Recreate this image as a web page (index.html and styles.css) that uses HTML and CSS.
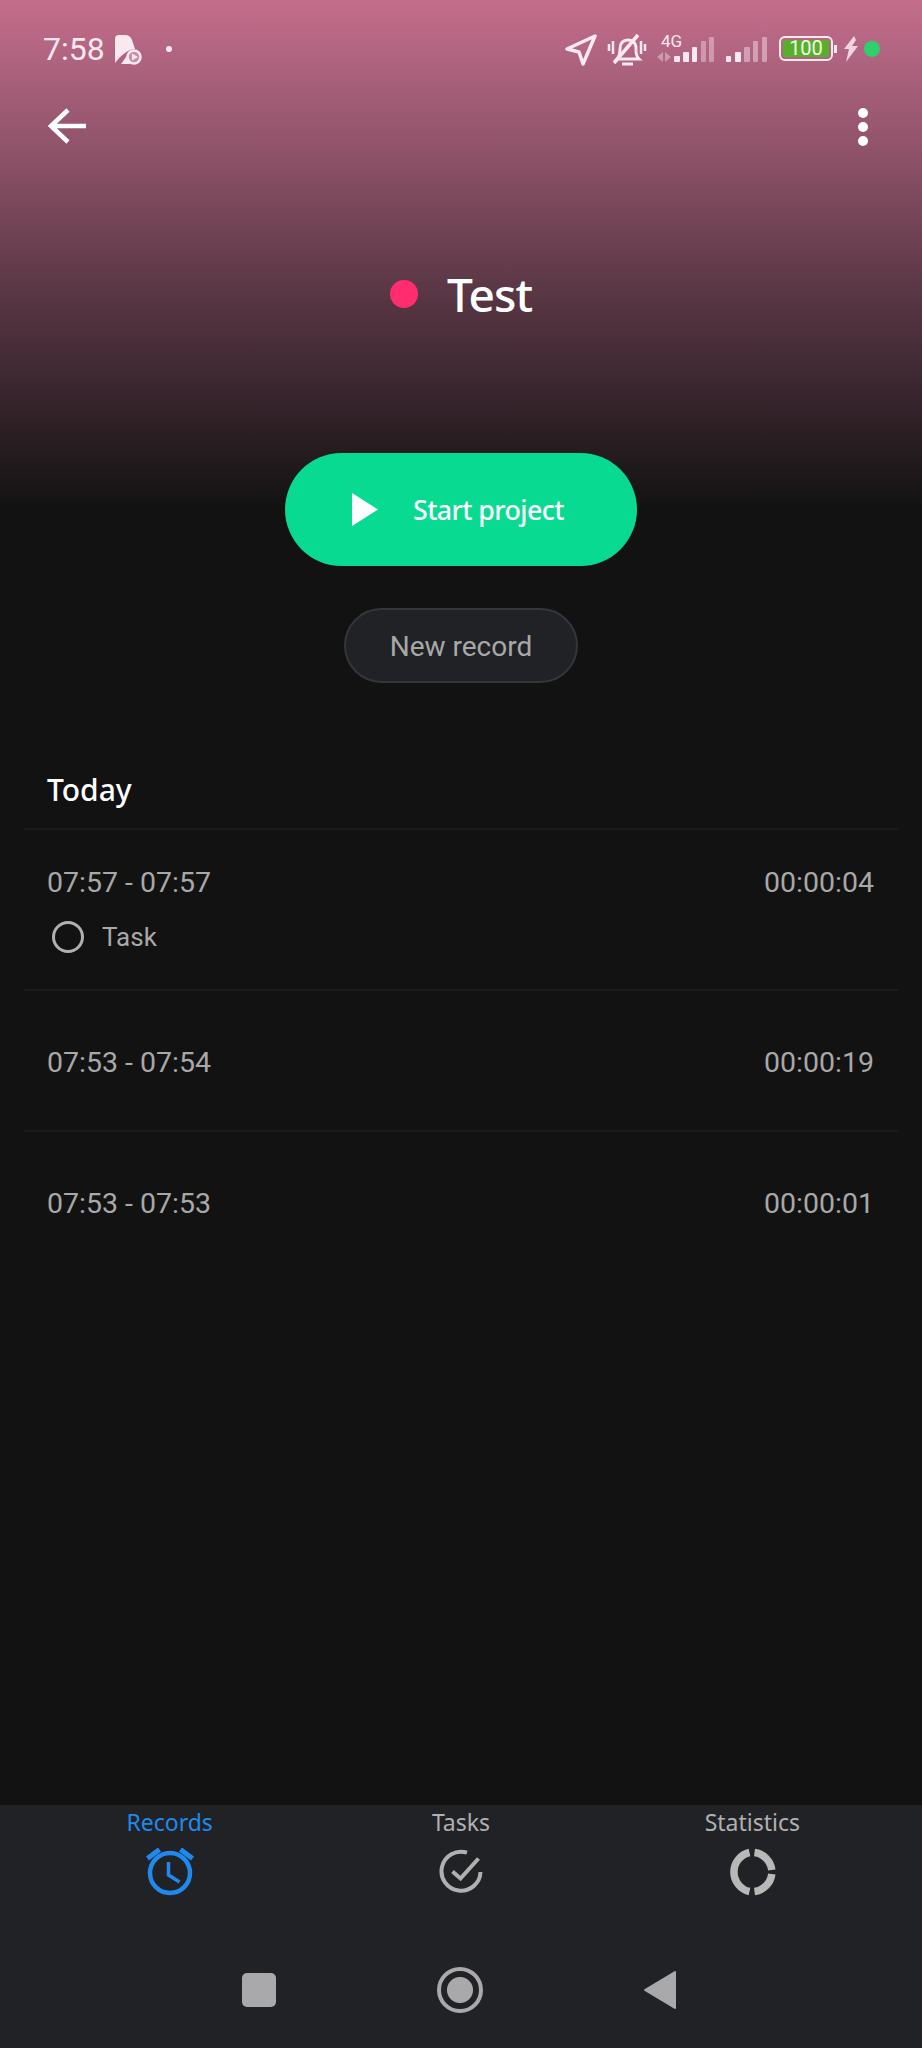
FILE: index.html
```html
<!DOCTYPE html>
<html lang="en">
<head>
    <meta charset="UTF-8">
    <meta name="viewport" content="width=device-width, initial-scale=1.0">
    <title>Test</title>
    <link rel="stylesheet" href="styles.css">
</head>
<body>
    <div class="screen">
        <div class="status-bar">
            <div class="status-left">
                <span class="clock">7:58</span>
                <svg class="app-icon" width="28" height="31" viewBox="0 0 28 31">
                    <path d="M1 29V5q0-4 4-4h6q5 0 7 5l3 9q-4 0-7 2-7 4-13 12z" fill="#f9e9ef"/>
                    <path d="M7 30l5-7q1-2 3-3-1 5 1 10z" fill="#f9e9ef"/>
                    <circle cx="20" cy="23" r="6.500" fill="#c98fa5" stroke="#f9e9ef" stroke-width="2.500"/>
                    <path d="M18 19.500l6 3.500-6 3.500z" fill="#f9e9ef"/>
                </svg>
                <span class="status-dot"></span>
            </div>
            <div class="status-right">
                <svg class="ic-location" width="33" height="33" viewBox="0 0 33 33"><path d="M31 3L3 16l12 3 4 12z" fill="none" stroke="#f9e9ef" stroke-width="3.500" stroke-linejoin="round"/></svg>
                <svg class="ic-bell" width="40" height="34" viewBox="0 0 40 34" fill="none" stroke="#f9e9ef">
                    <path d="M10 26q3-3 3-10 0-9 8-9 7 0 8 7v3q0 6 3 9z" stroke-width="3"/>
                    <path d="M15 31h11" stroke-width="3"/>
                    <path d="M31 2L7 30" stroke-width="3.500"/>
                    <path d="M2 11v7M6 8v13M34 8v13M38 11v7" stroke-width="2.500"/>
                </svg>
                <div class="signal">
                    <span class="net-label">4G</span>
                    <svg width="58" height="25" viewBox="0 0 58 25">
                        <path d="M6 15v10l-6-5zM8 15v10l6-5z" fill="#f9e9ef" opacity="0.4"/>
                        <rect x="17" y="19" width="6" height="6" rx="1" fill="#f9e9ef"/>
                        <rect x="26" y="15" width="6" height="10" rx="1" fill="#f9e9ef"/>
                        <rect x="35" y="10" width="5" height="15" rx="1" fill="#f9e9ef"/>
                        <rect x="44" y="4" width="5" height="21" rx="1" fill="#f9e9ef" opacity="0.4"/>
                        <rect x="52" y="0" width="5" height="25" rx="1" fill="#f9e9ef" opacity="0.4"/>
                    </svg>
                </div>
                <svg class="signal-2" width="41" height="25" viewBox="0 0 41 25">
                    <rect x="0" y="19" width="5" height="6" rx="1" fill="#f9e9ef"/>
                    <rect x="9" y="15" width="6" height="10" rx="1" fill="#f9e9ef"/>
                    <rect x="18" y="10" width="6" height="15" rx="1" fill="#f9e9ef" opacity="0.45"/>
                    <rect x="27" y="4" width="5" height="21" rx="1" fill="#f9e9ef" opacity="0.45"/>
                    <rect x="36" y="0" width="5" height="25" rx="1" fill="#f9e9ef" opacity="0.45"/>
                </svg>
                <div class="battery">
                    <div class="battery-body"><span class="battery-level">100</span></div>
                    <span class="battery-nub"></span>
                </div>
                <svg class="bolt" width="14" height="26" viewBox="0 0 14 26"><path d="M10 0L0 13h5L2 26l12-16H8l4-6z" fill="#f9e9ef" opacity="0.85"/></svg>
                <span class="charge-dot"></span>
            </div>
        </div>

        <div class="toolbar">
            <svg width="40" height="38" viewBox="0 0 40 38" fill="none" stroke="#fff" stroke-width="4.500"><path d="M21 3L4 19l17 16M4 19h35"/></svg>
            <div class="more">
                <span></span>
                <span></span>
                <span></span>
            </div>
        </div>

        <div class="title">
            <span class="title-dot"></span>
            <h1>Test</h1>
        </div>

        <div class="actions">
            <button class="start-btn">
                <svg width="26" height="33" viewBox="0 0 26 33"><path d="M0 0l26 16.500L0 33z" fill="#fff"/></svg>
                <span>Start project</span>
            </button>
            <button class="new-btn">New record</button>
        </div>

        <div class="records">
            <h2 class="day">Today</h2>
            <div class="record record-task">
                <div class="record-times">
                    <span>07:57 - 07:57</span>
                    <span>00:00:04</span>
                </div>
                <div class="record-meta">
                    <span class="task-circle"></span>
                    <span>Task</span>
                </div>
            </div>
            <div class="record">
                <div class="record-times">
                    <span>07:53 - 07:54</span>
                    <span>00:00:19</span>
                </div>
            </div>
            <div class="record">
                <div class="record-times">
                    <span>07:53 - 07:53</span>
                    <span>00:00:01</span>
                </div>
            </div>
        </div>

        <div class="bottom">
            <div class="tabs">
                <div class="tab active">
                    <span>Records</span>
                    <svg width="48" height="48" viewBox="0 0 48 48" fill="none" stroke="#2089ec" stroke-width="4.500">
                        <circle cx="24" cy="25" r="20"/>
                        <path d="M22.500 14v13l11 7" stroke-width="3.500"/>
                        <path d="M1.500 10.500L13.500 1.500M34.500 1.500L46.500 10.500" stroke-width="5"/>
                    </svg>
                </div>
                <div class="tab">
                    <span>Tasks</span>
                    <svg width="48" height="48" viewBox="0 0 48 48" fill="none" stroke="#b0b0b0" stroke-width="4">
                        <path d="M30 4.700A19.500 19.500 0 1 0 43.500 24"/>
                        <path d="M15.500 23.500l8 7 18-20"/>
                    </svg>
                </div>
                <div class="tab">
                    <span>Statistics</span>
                    <svg width="48" height="48" viewBox="0 0 48 48" fill="none" stroke="#b8b8b8" stroke-width="7.500">
                        <path d="M21.500 4.500A20 20 0 0 0 21.500 43.500"/>
                        <path d="M26.500 4.500A20 20 0 0 1 43.800 22"/>
                        <path d="M43.800 26A20 20 0 0 1 26.500 43.500"/>
                    </svg>
                </div>
            </div>
            <div class="nav">
                <span class="nav-square"></span>
                <span class="nav-home"></span>
                <svg width="34" height="40" viewBox="0 0 34 40"><path d="M32 2v36L2 20z" fill="#a9a9ab" stroke="#a9a9ab" stroke-width="2" stroke-linejoin="round"/></svg>
            </div>
        </div>
    </div>
</body>
</html>
```

FILE: styles.css
```css
* {
    box-sizing: border-box;
}
body {
    margin: 0;
    background-color: #121212;
    font-family: Roboto, sans-serif;
}
.screen {
    width: 922px;
    height: 2048px;
    display: flex;
    flex-direction: column;
    background: linear-gradient(#c46e8c 0, #8f5369 150px, #5a3745 290px, #121212 510px);
    overflow: hidden;
}
.status-bar {
    height: 98px;
    padding: 32px 42px 0 43px;
    display: flex;
    justify-content: space-between;
}
.status-left {
    display: flex;
    align-items: center;
    height: 34px;
}
.status-right {
    display: flex;
    align-items: flex-start;
    height: 34px;
}
.clock {
    font-size: 32px;
    color: #f9e9ef;
    margin-right: 9px;
}
.status-dot {
    width: 6px;
    height: 6px;
    border-radius: 50%;
    background-color: #f9e9ef;
    margin-left: 24px;
}
.ic-location {
    margin-top: 1px;
}
.ic-bell {
    margin: 1px 0 0 10px;
}
.signal {
    position: relative;
    margin: 5px 0 0 10px;
}
.signal svg {
    display: block;
}
.net-label {
    position: absolute;
    left: 4px;
    top: -4px;
    font-size: 17px;
    line-height: 17px;
    color: #f9e9ef;
}
.signal-2 {
    margin: 5px 0 0 11px;
}
.battery {
    display: flex;
    align-items: center;
    margin: 4px 0 0 12px;
}
.battery-body {
    width: 54px;
    height: 25px;
    border: 2.5px solid #f9e9ef;
    border-radius: 6px;
    padding: 2px;
    display: flex;
}
.battery-level {
    flex: 1;
    background-color: #58b02a;
    border-radius: 1px;
    color: #f4f8e8;
    font-size: 20px;
    line-height: 16px;
    text-align: center;
}
.battery-nub {
    width: 3px;
    height: 8px;
    margin-left: 1px;
    background-color: #f9e9ef;
}
.bolt {
    margin: 4px 0 0 7px;
}
.charge-dot {
    width: 16px;
    height: 16px;
    margin: 9px 0 0 6px;
    border-radius: 50%;
    background-color: #2fd06c;
}
.toolbar {
    height: 60px;
    padding: 9px 54px 0 47px;
    display: flex;
    justify-content: space-between;
}
.more {
    display: flex;
    flex-direction: column;
    gap: 4px;
    padding-top: 1px;
}
.more span {
    width: 10px;
    height: 10px;
    border-radius: 50%;
    background-color: #fff;
}
.title {
    margin-top: 101px;
    height: 70px;
    display: flex;
    justify-content: center;
    align-items: center;
    gap: 29px;
}
.title-dot {
    width: 28px;
    height: 28px;
    border-radius: 50%;
    background-color: #ff2d6f;
}
.title h1 {
    margin: 0;
    font-family: "Noto Sans", sans-serif;
    font-size: 46px;
    font-weight: 500;
    color: #fff;
    letter-spacing: -1px;
}
.actions {
    margin-top: 124px;
    display: flex;
    flex-direction: column;
    align-items: center;
    gap: 42px;
}
.start-btn {
    width: 352px;
    height: 113px;
    border: none;
    border-radius: 57px;
    background-color: #08db91;
    padding: 0 0 0 67px;
    display: flex;
    align-items: center;
    gap: 35px;
    color: #fff;
    font-family: "Noto Sans", sans-serif;
    font-size: 26.800px;
    font-weight: 500;
    letter-spacing: -0.6px;
}
.new-btn {
    width: 234px;
    height: 75px;
    padding: 2px 0 0;
    border: 2px solid #34363b;
    border-radius: 38px;
    background-color: #212226;
    color: #a8a8a8;
    font-family: Roboto, sans-serif;
    font-size: 28px;
}
.records {
    flex: 1;
    margin-top: 80px;
    padding: 0 24px;
}
.day {
    margin: 0;
    height: 67px;
    padding: 0 0 0 23px;
    font-family: "Noto Sans", sans-serif;
    font-size: 30px;
    line-height: 53px;
    font-weight: 500;
    color: #fff;
    border-bottom: 2px solid #1b1b1b;
}
.record {
    height: 141px;
    padding: 52px 24px 0 23px;
    border-bottom: 2px solid #1b1b1b;
    color: #a8a8a8;
    font-size: 28.500px;
}
.record:last-child {
    border-bottom: none;
}
.record-task {
    height: 161px;
    padding-top: 33px;
}
.record-times {
    display: flex;
    justify-content: space-between;
    line-height: 40px;
}
.record-meta {
    margin-top: 18px;
    padding-left: 5px;
    display: flex;
    align-items: center;
    gap: 18px;
    font-size: 26px;
    line-height: 32px;
}
.task-circle {
    width: 32px;
    height: 32px;
    border: 3px solid #b0b0b0;
    border-radius: 50%;
}
.bottom {
    height: 243px;
    background-color: #212226;
}
.tabs {
    padding: 0 24px;
    display: grid;
    grid-template-columns: repeat(3, 1fr);
}
.tab {
    display: flex;
    flex-direction: column;
    align-items: center;
    gap: 9px;
    font-family: "Noto Sans", sans-serif;
    font-size: 23px;
    line-height: 34px;
    color: #b0b0b0;
}
.tab.active {
    color: #2089ec;
}
.nav {
    margin-top: 71px;
    height: 46px;
    padding-left: 242px;
    display: flex;
    align-items: center;
}
.nav-square {
    width: 34px;
    height: 34px;
    border-radius: 5px;
    background-color: #a9a9ab;
}
.nav-home {
    width: 46px;
    height: 46px;
    margin: 0 160px 0 161px;
    border: 4px solid #a9a9ab;
    border-radius: 50%;
    background: radial-gradient(circle, #a9a9ab 12.500px, transparent 13.500px);
}
```
